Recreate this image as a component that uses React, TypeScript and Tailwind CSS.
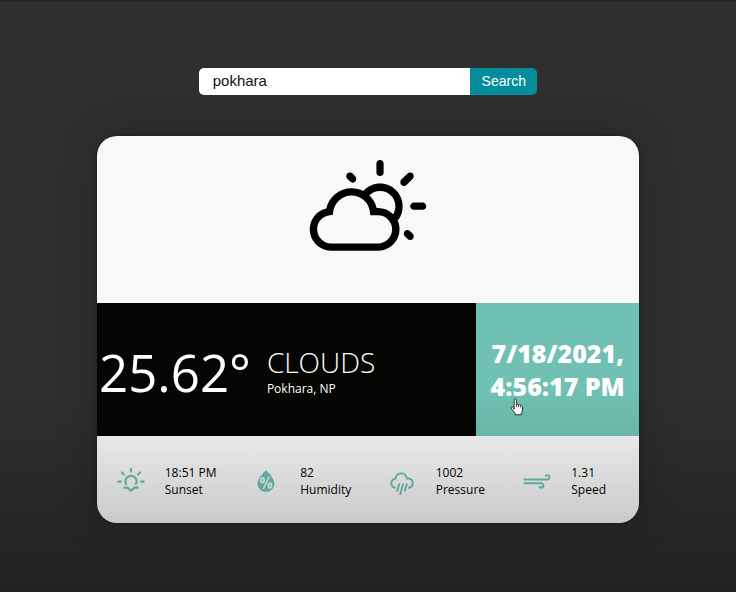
import { useState } from "react";
import type { IconType } from "react-icons";
import { WiDayCloudy, WiHumidity, WiRain, WiStrongWind, WiSunset } from "react-icons/wi";

type Stat = { icon: IconType; value: string; label: string };

const stats: Stat[] = [
  { icon: WiSunset, value: "18:51 PM", label: "Sunset" },
  { icon: WiHumidity, value: "82", label: "Humidity" },
  { icon: WiRain, value: "1002", label: "Pressure" },
  { icon: WiStrongWind, value: "1.31", label: "Speed" },
];

function SearchBar() {
  const [city, setCity] = useState("pokhara");
  return (
    <form
      className="flex h-[27px] w-[46%] overflow-hidden rounded-[5px] font-['Liberation_Sans',Arial,sans-serif]"
      onSubmit={(e) => e.preventDefault()}
    >
      <input
        type="search"
        aria-label="City"
        value={city}
        onChange={(e) => setCity(e.target.value)}
        className="min-w-0 flex-1 appearance-none bg-white px-3.5 text-[15px] text-[#111] outline-none"
      />
      <button type="submit" className="w-[67px] bg-[#028c9c] pb-0.5 text-sm text-white">
        Search
      </button>
    </form>
  );
}

function StatItem({ icon: Icon, value, label }: Stat) {
  return (
    <div className="grid grid-cols-2 items-center">
      <Icon className="size-[34px] justify-self-center text-[#6fc1b3]" aria-hidden="true" />
      <p className="text-xs leading-[17px] font-medium whitespace-nowrap text-black">
        {value}
        <br />
        {label}
      </p>
    </div>
  );
}

function HandCursor() {
  return (
    <svg viewBox="0 0 14 18" className="absolute top-[95px] left-[34px] h-[18px] w-[14px]" aria-hidden="true">
      <path
        d="M4.2 11.2V2.1c0-1.6 2.2-1.6 2.2 0v4.6c.4-.8 1.9-.7 2.1.3.5-.7 1.8-.5 2 .5.7-.5 2-.2 2 1v3.6c0 1.6-.9 2.3-1.2 3.4v1.3H5.2v-1.3C4.2 14.1 2 11.7 1.3 10.3.7 9 2.2 8.2 3 9.2z"
        fill="#fff"
        stroke="#222"
        strokeWidth="0.9"
        strokeLinejoin="round"
      />
      <path d="M6.4 6.7V9M8.5 7v2.2M10.5 7.5v2" stroke="#222" strokeWidth="0.8" fill="none" />
    </svg>
  );
}

export default function App() {
  return (
    <main className="relative flex min-h-screen flex-col items-center border-t-2 border-[#242528] bg-[#2f2f2f] pt-[66px] font-['Open_Sans','Noto_Sans',sans-serif]">
      <SearchBar />

      <article className="mt-[41px] w-[542px] max-w-full overflow-hidden rounded-[20px] bg-[#f8f8f8] shadow-[0_0_3px_rgba(0,0,0,0.4),0_0_40px_rgba(0,0,0,0.22)]">
        <div className="flex h-[167px] justify-center pt-5">
          <WiDayCloudy className="size-[130px] text-black" aria-label="Partly cloudy" />
        </div>

        <div className="flex h-[133px] text-white">
          <div className="flex w-[70%] items-center gap-4 bg-[#050503] pt-1.5 pl-0.5">
            <p className="text-[51px] leading-none">25.62°</p>
            <div className="pb-1.5">
              <h1 className="text-[28px] leading-[38px] font-light uppercase">Clouds</h1>
              <p className="text-xs leading-4">Pokhara, NP</p>
            </div>
          </div>
          <div className="relative flex w-[30%] items-center justify-center bg-[#70c1b3]">
            <time className="text-center text-[25px] leading-[33px] font-extrabold">
              7/18/2021,
              <br />
              4:56:17 PM
            </time>
            <HandCursor />
          </div>
        </div>

        <div className="grid h-[87px] grid-cols-4 items-center pt-0.5">
          {stats.map((s) => (
            <StatItem key={s.label} {...s} />
          ))}
        </div>
      </article>

      <div className="pointer-events-none absolute inset-x-0 bottom-0 h-[202px] bg-linear-to-b from-transparent to-black/28" />
    </main>
  );
}
